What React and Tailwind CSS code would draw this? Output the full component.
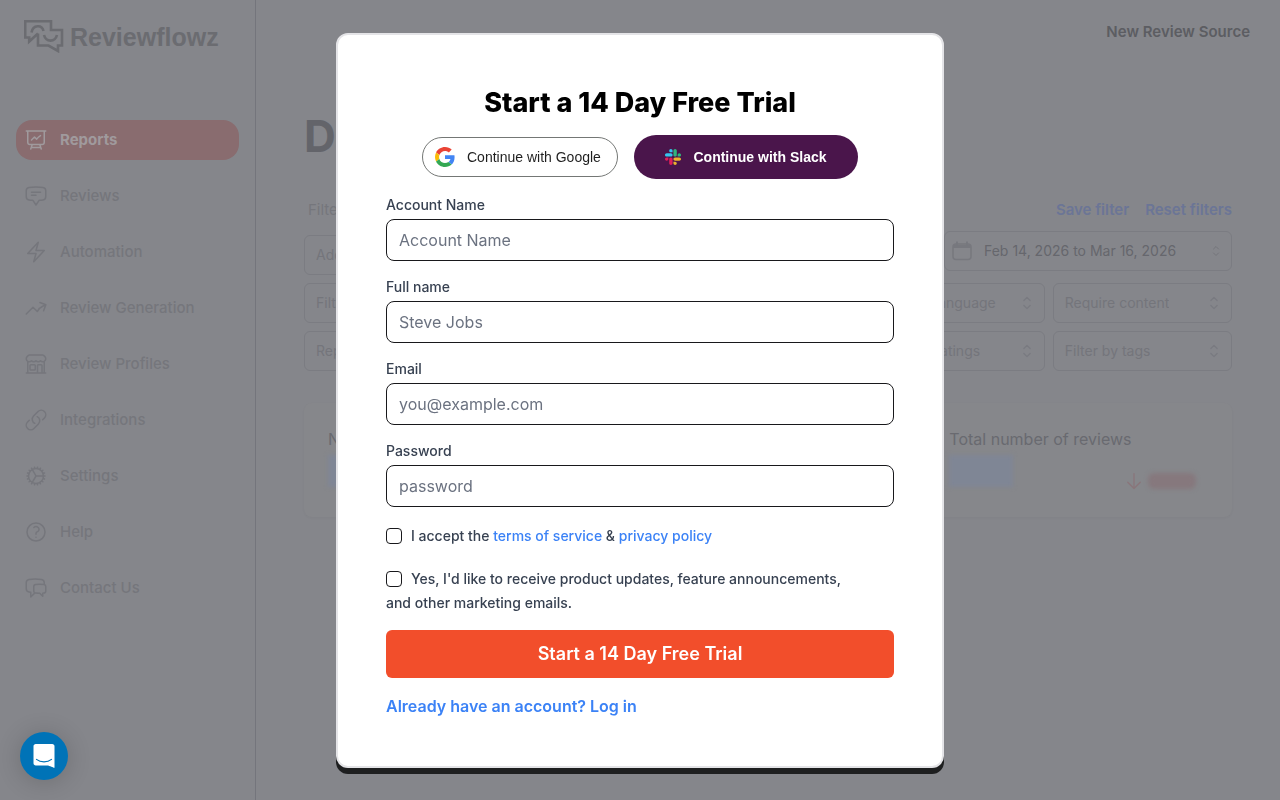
import React, { useState } from 'react';
import {
  HiOutlinePresentationChartLine,
  HiOutlineChatBubbleBottomCenterText,
  HiOutlineBolt,
  HiOutlineArrowTrendingUp,
  HiOutlineBuildingStorefront,
  HiOutlineLink,
  HiOutlineCog,
  HiOutlineQuestionMarkCircle,
  HiOutlineChatBubbleLeftRight,
  HiOutlineChevronUpDown,
  HiOutlineArrowDown,
} from 'react-icons/hi2';

const navItems = [
  { label: 'Reports', icon: HiOutlinePresentationChartLine, active: true },
  { label: 'Reviews', icon: HiOutlineChatBubbleBottomCenterText },
  { label: 'Automation', icon: HiOutlineBolt },
  { label: 'Review Generation', icon: HiOutlineArrowTrendingUp },
  { label: 'Review Profiles', icon: HiOutlineBuildingStorefront },
  { label: 'Integrations', icon: HiOutlineLink },
  { label: 'Settings', icon: HiOutlineCog },
  { label: 'Help', icon: HiOutlineQuestionMarkCircle },
  { label: 'Contact Us', icon: HiOutlineChatBubbleLeftRight },
];

const filters = [
  'Filter by source', 'Filter by platform', 'Filter by country', 'Filter by language', 'Require content',
  'Reply status', 'Filter by author', 'Filter by dates', 'Filter by ratings', 'Filter by tags',
];

const fields = [
  { id: 'account', label: 'Account Name', placeholder: 'Account Name', type: 'text' },
  { id: 'name', label: 'Full name', placeholder: 'Steve Jobs', type: 'text' },
  { id: 'email', label: 'Email', placeholder: 'you@example.com', type: 'email' },
  { id: 'password', label: 'Password', placeholder: 'password', type: 'password' },
];

function LogoMark() {
  return (
    <svg viewBox="0 0 40 33" className="w-10 h-[33px]" fill="none" stroke="currentColor" strokeWidth="2.6">
      <path d="M14 13.500V25.500H24.500L34 31V25.500H38V10H27V1.200H1.200V17.500H5.200V21.500L14 13.500" />
      <path d="M7.500 12.500C9 4.500 18 4.500 19.500 11" />
      <path d="M20 15C22 22.500 31 22.500 33 15" />
    </svg>
  );
}

function GoogleLogo() {
  return (
    <svg viewBox="0 0 48 48" className="w-5 h-5">
      <path fill="#EA4335" d="M24 9.500c3.540 0 6.710 1.220 9.210 3.600l6.850-6.850C35.900 2.380 30.470 0 24 0 14.620 0 6.510 5.380 2.560 13.220l7.980 6.190C12.430 13.720 17.740 9.500 24 9.500z" />
      <path fill="#4285F4" d="M46.980 24.550c0-1.570-.150-3.090-.380-4.550H24v9.020h12.940c-.580 2.960-2.260 5.480-4.780 7.180l7.730 6c4.510-4.180 7.090-10.360 7.090-17.650z" />
      <path fill="#FBBC05" d="M10.530 28.590c-.480-1.450-.760-2.990-.760-4.590s.270-3.140.760-4.590l-7.980-6.190C.920 16.460 0 20.120 0 24c0 3.880.920 7.540 2.560 10.780l7.970-6.190z" />
      <path fill="#34A853" d="M24 48c6.480 0 11.930-2.130 15.890-5.810l-7.730-6c-2.150 1.450-4.920 2.300-8.160 2.300-6.260 0-11.570-4.220-13.470-9.910l-7.980 6.190C6.510 42.620 14.620 48 24 48z" />
    </svg>
  );
}

function SlackLogo() {
  return (
    <svg viewBox="0 0 122.800 122.800" className="w-4 h-4">
      <path fill="#e01e5a" d="M25.800 77.600c0 7.100-5.800 12.900-12.900 12.900S0 84.700 0 77.600s5.800-12.900 12.900-12.900h12.900v12.900zM32.300 77.600c0-7.100 5.800-12.900 12.900-12.900s12.900 5.800 12.900 12.900v32.300c0 7.100-5.800 12.900-12.900 12.900s-12.900-5.800-12.900-12.900V77.600z" />
      <path fill="#36c5f0" d="M45.200 25.800c-7.100 0-12.900-5.800-12.900-12.900S38.100 0 45.200 0s12.900 5.800 12.900 12.900v12.900H45.200zM45.200 32.300c7.100 0 12.900 5.800 12.900 12.900s-5.800 12.900-12.900 12.900H12.900C5.800 58.100 0 52.300 0 45.200s5.800-12.900 12.900-12.900h32.300z" />
      <path fill="#2eb67d" d="M97 45.200c0-7.100 5.800-12.900 12.900-12.900s12.900 5.800 12.900 12.900-5.800 12.900-12.900 12.900H97V45.200zM90.500 45.200c0 7.100-5.800 12.900-12.900 12.900s-12.900-5.800-12.900-12.900V12.900C64.700 5.800 70.500 0 77.600 0s12.900 5.800 12.900 12.900v32.300z" />
      <path fill="#ecb22e" d="M77.600 97c7.100 0 12.900 5.800 12.900 12.900s-5.800 12.900-12.900 12.900-12.900-5.800-12.900-12.900V97h12.900zM77.600 90.500c-7.100 0-12.900-5.800-12.900-12.900s5.800-12.900 12.900-12.900h32.300c7.100 0 12.900 5.800 12.900 12.900s-5.800 12.900-12.900 12.900H77.600z" />
    </svg>
  );
}

function CalendarIcon() {
  return (
    <svg viewBox="0 0 20 20" className="w-5 h-5 text-[#77787e]" fill="none" stroke="currentColor">
      <rect x="1" y="3" width="18" height="15.500" rx="3" strokeWidth="1.500" />
      <path d="M1 5.500h18" strokeWidth="3" />
      <path d="M5 0.500v4M15 0.500v4" strokeWidth="1.800" />
    </svg>
  );
}

function Sidebar() {
  return (
    <aside className="w-64 shrink-0 border-r border-[#74757c] px-4">
      <a href="#home" className="flex items-center gap-[6px] pl-2 pt-5 text-[#6b6c71]">
        <LogoMark />
        <span className="font-['Liberation_Sans',sans-serif] text-[25px] leading-8 font-bold">Reviewflowz</span>
      </a>
      <nav className="mt-[67px] flex flex-col gap-4">
        {navItems.map(({ label, icon: Icon, active }) => (
          <a
            key={label}
            href="#nav"
            className={
              active
                ? 'flex items-center gap-3 h-10 px-2 rounded-2xl bg-[#896c6f] text-[#a09a9d] font-bold text-[15px]'
                : 'flex items-center gap-3 h-10 px-2 rounded-2xl text-[#75767c] font-medium text-[15px]'
            }
          >
            <Icon className="w-6 h-6" />
            {label}
          </a>
        ))}
      </nav>
    </aside>
  );
}

function Dashboard() {
  return (
    <main className="flex-1 min-w-0 px-12">
      <div className="h-16 -mr-[18px] flex items-center justify-end">
        <a href="#new" className="text-[15px] font-semibold text-[#5c5d62]">New Review Source</a>
      </div>
      <h1 className="mt-10 text-[44px] leading-[64px] font-bold text-[#63646a]">Data</h1>

      <div className="mt-8 pl-1 h-5 flex items-center justify-between text-[15px]">
        <span className="text-[#75767c]">Filters</span>
        <div className="flex gap-4 font-semibold text-[#6b7596]">
          <a href="#save">Save filter</a>
          <a href="#reset">Reset filters</a>
        </div>
      </div>

      <div className="mt-[11px] flex justify-between text-sm text-[#74757b]">
        <button className="w-3/5 h-10 mt-1 flex items-center px-[11px] rounded-md border border-[#7b7c82]">Add a filter</button>
        <button className="w-72 h-10 flex items-center px-[7px] rounded-md border border-[#7b7c82] text-[#66676d]">
          <CalendarIcon />
          <span className="ml-3 flex-1 text-left">Feb 14, 2026 to Mar 16, 2026</span>
          <HiOutlineChevronUpDown className="w-4 h-4 text-[#74757b]" />
        </button>
      </div>

      <div className="mt-2 grid grid-cols-5 gap-2 text-sm text-[#74757b]">
        {filters.map((f) => (
          <button key={f} className="h-10 flex items-center justify-between pl-[11px] pr-[7px] rounded-md border border-[#7b7c82]">
            <span className="truncate">{f}</span>
            <HiOutlineChevronUpDown className="w-5 h-5 text-[#797a80]" />
          </button>
        ))}
      </div>

      <div className="mt-8 grid grid-cols-3 gap-1 rounded-lg shadow-[0_1px_3px_rgba(0,0,0,0.03)] bg-[#86878b] text-[#696a70]">
        {['NPS', 'Rating', 'Total number of reviews'].map((title) => (
          <div key={title} className="h-[114px] px-6 pt-6">
            <h2 className="leading-6">{title}</h2>
            <div className="flex justify-between pr-3 mt-1">
              <div className="w-16 h-8 bg-[#7f8695] blur-[2px]" />
              <div className="flex items-center mt-4 gap-1 text-[#8a757a]">
                <HiOutlineArrowDown className="w-5 h-5" />
                <div className="w-12 h-4 bg-[#86787d] rounded-md blur-[2px]" />
              </div>
            </div>
          </div>
        ))}
      </div>
    </main>
  );
}

function SignupModal() {
  const [values, setValues] = useState({ account: '', name: '', email: '', password: '' });

  const handleChange = (e) => {
    setValues({ ...values, [e.target.id]: e.target.value });
  };

  return (
    <div className="fixed inset-0 overflow-y-auto flex items-start justify-center pt-[33px]">
      <div className="w-full max-w-[608px] p-12 bg-white rounded-xl border-2 border-[#e4e4e7] shadow-[0_6px_0_#1e1f20]">
        <h2 className="text-[27px] leading-10 font-extrabold text-center text-black">Start a 14 Day Free Trial</h2>

        <div className="mt-3 flex items-center justify-center gap-4 font-['Liberation_Sans',sans-serif] text-sm">
          <button className="w-[196px] h-10 flex items-center gap-3 px-3 rounded-full border border-[#747775] text-[#1f1f1f] whitespace-nowrap">
            <GoogleLogo />
            Continue with Google
          </button>
          <button className="w-56 h-11 flex items-center justify-center gap-3 rounded-full bg-[#4a154b] text-white font-bold">
            <SlackLogo />
            Continue with Slack
          </button>
        </div>

        <form onSubmit={(e) => e.preventDefault()} className="mt-4 text-[#374151]">
          <div className="flex flex-col gap-4">
            {fields.map((f) => (
              <div key={f.id} className="flex flex-col gap-1">
                <label htmlFor={f.id} className="text-sm font-medium">{f.label}</label>
                <input
                  id={f.id}
                  type={f.type}
                  value={values[f.id]}
                  onChange={handleChange}
                  placeholder={f.placeholder}
                  className="w-full h-[42px] px-3 rounded-lg border border-[#18181b] bg-white text-base placeholder:text-[#6b7280]"
                />
              </div>
            ))}
          </div>

          <div className="mt-[17px] text-sm leading-6 font-medium">
            <input id="terms" type="checkbox" className="appearance-none w-4 h-4 mr-[9px] align-[-3px] rounded border border-[#18181b] bg-white checked:bg-[#3b82f6]" />
            <label htmlFor="terms">
              I accept the <a href="#terms" className="text-[#3b82f6]">terms of service</a> &amp;{' '}
              <a href="#privacy" className="text-[#3b82f6]">privacy policy</a>
            </label>
          </div>
          <div className="mt-[19px] text-sm leading-6 font-medium">
            <input id="updates" type="checkbox" className="appearance-none w-4 h-4 mr-[9px] align-[-3px] rounded border border-[#18181b] bg-white checked:bg-[#3b82f6]" />
            <label htmlFor="updates">
              Yes, I'd like to receive product updates, feature announcements,
              <br />
              and other marketing emails.
            </label>
          </div>

          <button type="submit" className="mt-[15px] w-full h-12 rounded-md bg-[#f24e2b] text-white text-lg font-semibold">
            Start a 14 Day Free Trial
          </button>
        </form>

        <a href="#login" className="mt-4 block leading-6 font-semibold text-[#3b82f6]">Already have an account? Log in</a>
      </div>
    </div>
  );
}

function App() {
  return (
    <div className="font-['Inter',sans-serif] h-screen overflow-hidden bg-[#85868b] flex">
      <Sidebar />
      <Dashboard />
      <SignupModal />
      <button
        aria-label="Open chat"
        className="fixed left-5 bottom-5 w-12 h-12 rounded-full bg-[#0073b7] flex items-center justify-center shadow-[0_2px_24px_rgba(0,0,0,0.18)]"
      >
        <svg viewBox="0 0 28 32" className="w-[22px] h-6">
          <path fill="#fff" d="M28 32s-4.700-1.900-8.500-3.200H3C1.300 28.800 0 27.500 0 25.800V3C0 1.300 1.300 0 3 0h22c1.700 0 3 1.300 3 3V32z" />
          <path d="M4 20.500c5.500 4.300 14.500 4.300 20 0" fill="none" stroke="#0073b7" strokeWidth="1.600" strokeLinecap="round" />
        </svg>
      </button>
    </div>
  );
}

export default App;
